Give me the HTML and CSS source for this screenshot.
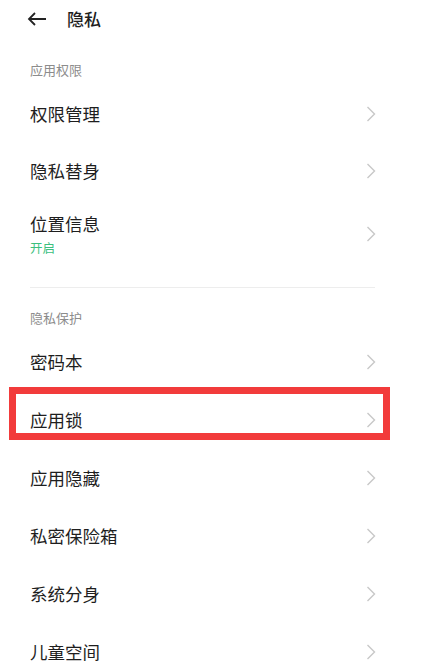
FILE: index.html
```html
<!DOCTYPE html>
<html lang="zh">
<head>
    <meta charset="UTF-8">
    <meta name="viewport" content="width=device-width, initial-scale=1.0">
    <title>隐私</title>
    <link rel="stylesheet" href="styles.css">
</head>
<body>
    <div class="header">
        <svg class="back" width="20" height="14" viewBox="0 0 20 14">
            <path d="M19 7H2M8 1L2 7l6 6" fill="none" stroke="#222" stroke-width="1.8"/>
        </svg>
        <span class="title">隐私</span>
    </div>

    <div class="group-title">应用权限</div>
    <ul class="list">
        <li class="row row-s"><span class="name">权限管理</span><svg class="arrow" viewBox="0 0 10 16"><path d="M1.5 1l7 7-7 7"/></svg></li>
        <li class="row row-s"><span class="name">隐私替身</span><svg class="arrow" viewBox="0 0 10 16"><path d="M1.5 1l7 7-7 7"/></svg></li>
        <li class="row row-tall">
            <div class="txt">
                <span class="name">位置信息</span>
                <span class="sub">开启</span>
            </div>
            <svg class="arrow" viewBox="0 0 10 16"><path d="M1.5 1l7 7-7 7"/></svg>
        </li>
    </ul>
    <div class="divider"></div>

    <div class="group-title g2">隐私保护</div>
    <ul class="list">
        <li class="row"><span class="name">密码本</span><svg class="arrow" viewBox="0 0 10 16"><path d="M1.5 1l7 7-7 7"/></svg></li>
        <li class="row">
            <span class="name">应用锁</span><svg class="arrow" viewBox="0 0 10 16"><path d="M1.5 1l7 7-7 7"/></svg>
            <div class="mark"></div>
        </li>
        <li class="row"><span class="name">应用隐藏</span><svg class="arrow" viewBox="0 0 10 16"><path d="M1.5 1l7 7-7 7"/></svg></li>
        <li class="row"><span class="name">私密保险箱</span><svg class="arrow" viewBox="0 0 10 16"><path d="M1.5 1l7 7-7 7"/></svg></li>
        <li class="row"><span class="name">系统分身</span><svg class="arrow" viewBox="0 0 10 16"><path d="M1.5 1l7 7-7 7"/></svg></li>
        <li class="row"><span class="name">儿童空间</span><svg class="arrow" viewBox="0 0 10 16"><path d="M1.5 1l7 7-7 7"/></svg></li>
    </ul>
</body>
</html>
```

FILE: styles.css
```css
*{
  margin: 0;
  padding: 0;
  list-style: none;
  box-sizing: border-box;
}
body {
  width: 433px;
  height: 671px;
  overflow: hidden;
  background: #fff;
  font-family: "Noto Sans CJK SC", "Noto Sans", sans-serif;
  color: #1e1e1e;
}
.header {
  display: flex;
  align-items: center;
  height: 38px;
  padding-left: 27px;
}
.header .back {
  display: block;
  margin-right: 20px;
}
.header .title {
  font-size: 17px;
  font-weight: 500;
  line-height: 24px;
}
.group-title {
  height: 47px;
  padding: 24px 0 0 30px;
  font-size: 13px;
  line-height: 16px;
  color: #8c8c8c;
}
.group-title.g2 {
  height: 45px;
  padding-top: 22px;
}
.list .row {
  position: relative;
  display: flex;
  align-items: center;
  justify-content: space-between;
  height: 58px;
  padding: 0 57px 0 30px;
}
.list .row-s {
  height: 57px;
}
.list .row-tall {
  height: 70px;
}
.row .name {
  font-size: 17.5px;
  line-height: 24px;
}
.row .txt {
  display: flex;
  flex-direction: column;
}
.row .sub {
  margin-top: 3px;
  font-size: 12.5px;
  line-height: 18px;
  color: #3cbf7e;
}
.row .arrow {
  display: block;
  width: 10px;
  height: 16px;
  fill: none;
  stroke: #c8c8c8;
  stroke-width: 1.4;
}
.divider {
  height: 1px;
  margin: 18px 58px 0 30px;
  background: #ededed;
}
/* 红框标注 */
.row .mark {
  position: absolute;
  top: -4px;
  left: 9px;
  width: 381px;
  height: 53px;
  border: 7px solid #f23b3b;
}
```
